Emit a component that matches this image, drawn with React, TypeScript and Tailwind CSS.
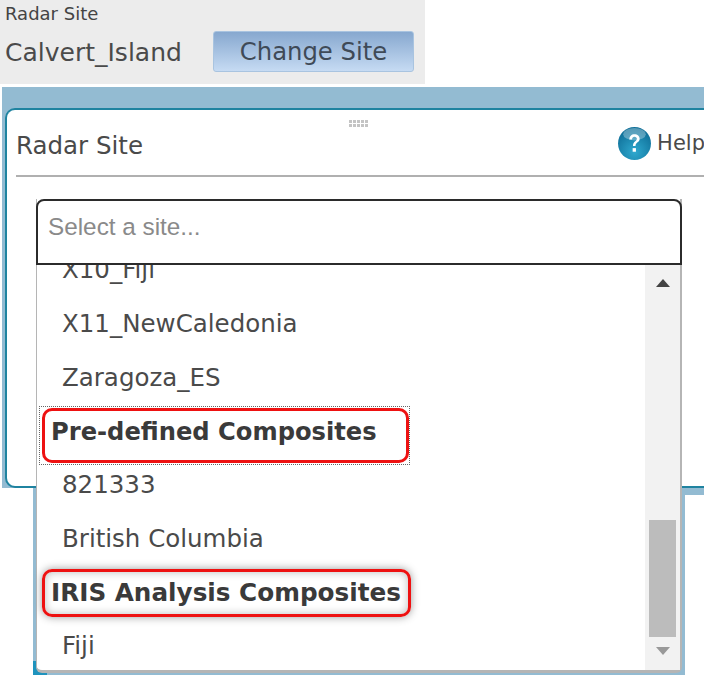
import React from 'react';

const siteItems = ['X10_Fiji', 'X11_NewCaledonia', 'Zaragoza_ES'];

const HelpIcon = () => (
  <svg width="35" height="35" viewBox="0 0 34 34" className="shrink-0">
    <defs>
      <radialGradient id="helpBall" cx="50%" cy="75%" r="70%">
        <stop offset="0%" stopColor="#2fa9cf" />
        <stop offset="100%" stopColor="#0f6f98" />
      </radialGradient>
    </defs>
    <circle cx="17" cy="17" r="16" fill="url(#helpBall)" />
    <ellipse cx="17" cy="8" rx="11" ry="6" fill="#ffffff" opacity="0.3" />
    <path d="M12 13c0-3 2-5 5-5s5 2 5 4.500c0 3.500-4 3.500-4 7h-2.500c0-4.500 3.800-4.500 3.800-7 0-1-.9-2-2.300-2s-2.300 1-2.400 2.500z" fill="#ffffff" />
    <rect x="15.200" y="21.500" width="3.200" height="3.500" fill="#ffffff" />
  </svg>
);

export default function App() {
  return (
    <div className="relative w-[704px] h-[679px] overflow-hidden bg-white font-['DejaVu_Sans',sans-serif] text-[#4a4a4a]">
      {/* Site summary */}
      <div className="w-[425px] h-[84px] bg-[#ececec] pl-[5px]">
        <div className="text-[18px] leading-[27px] text-[#444444]">Radar Site</div>
        <div className="flex items-center h-[41px] mt-[4px] pt-[3px]">
          <span className="w-[208px] text-[25px]">Calvert_Island</span>
          <button className="w-[201px] h-[41px] -mt-[3px] pt-[2px] rounded-[3px] border border-[#a9c4e0] bg-gradient-to-b from-[#87a8cf] to-[#c6dbf3] text-[24.300px] text-[#3f4a57]">
            Change Site
          </button>
        </div>
      </div>

      {/* Radar site dialog */}
      <div className="ml-[2px] mt-[3px] h-[401px] bg-[#93bbd2] pl-[3px] pt-[21px]">
        <div className="relative h-[380px] rounded-l-[10px] border-l-2 border-y-2 border-[#1f83a0] bg-white pl-[9px]">
          <div className="absolute left-[342px] top-[10px] grid grid-cols-5 gap-px">
            {Array.from({ length: 10 }).map((_, i) => (
              <span key={i} className="w-[3px] h-[3px] bg-[#c4c4c4]" />
            ))}
          </div>
          <div className="flex items-center justify-between h-[67px] mr-[-1px] border-b-2 border-[#b0b0b0] pt-[2px]">
            <span className="text-[24.500px] pt-[5px]">Radar Site</span>
            <span className="flex items-center gap-[5px] text-[21px]">
              <HelpIcon />
              Help
            </span>
          </div>
        </div>
      </div>

      {/* Second dialog showing behind the list */}
      <div className="ml-[33px] h-[187px] bg-[#93bbd2]" />
      <div className="absolute left-[685px] top-[495px] w-[19px] h-[184px] bg-white" />
      <div className="absolute left-[33px] top-[675px] w-[671px] h-[4px] bg-white" />
      <div className="absolute left-[33px] top-[661px] w-[5px] h-[14px] bg-[#1f93bd]" />
      <div className="absolute left-[33px] top-[672px] w-[14px] h-[3px] bg-[#1f93bd]" />

      {/* Site picker */}
      <div className="absolute left-[36px] top-[199px] w-[646px] h-[474px] flex flex-col rounded-b-[6px] border-b-[3px] border-r-2 border-l border-[#b5b5b5] bg-white">
        <div className="-mx-px -mr-[2px] h-[66px] shrink-0 flex items-center rounded-t-[8px] border-2 border-[#2b2b2b] bg-white pl-[10px] pb-[9px] font-['Liberation_Sans',sans-serif] text-[24.300px] text-[#8a8a8a]">
          Select a site...
        </div>
        <div className="flex flex-1 min-h-0">
          <div className="relative flex-1 overflow-hidden text-[24.500px]">
            <div className="-mt-[22px] pl-[25px]">
              {siteItems.map((name) => (
                <div key={name} className="h-[54px] flex items-center">
                  {name}
                </div>
              ))}
            </div>
            <div className="pl-[14px] h-[54px] flex items-center font-bold text-[24.200px] text-[#3a3a3a]">
              Pre-defined Composites
            </div>
            <div className="pl-[25px] h-[53px] flex items-center">821333</div>
            <div className="pl-[25px] h-[54px] flex items-center">British Columbia</div>
            <div className="pl-[14px] h-[53px] flex items-center font-bold text-[24.700px] text-[#3a3a3a]">
              IRIS Analysis Composites
            </div>
            <div className="pl-[25px] h-[54px] flex items-center">Fiji</div>
          </div>
          {/* Scrollbar */}
          <div className="w-[35px] shrink-0 flex flex-col items-center bg-[#f2f2f2] pt-[14px] pb-[15px]">
            <span className="w-0 h-0 border-x-[7px] border-x-transparent border-b-[8px] border-b-[#444444]" />
            <div className="flex-1" />
            <div className="w-[27px] h-[117px] bg-[#bcbcbc] mb-[10px]" />
            <span className="w-0 h-0 border-x-[7px] border-x-transparent border-t-[8px] border-t-[#999999]" />
          </div>
        </div>
      </div>

      {/* Red annotation boxes */}
      <div className="absolute left-[39px] top-[406px] w-[371px] h-[59px] border border-dotted border-[#666666]" />
      <div className="absolute left-[42px] top-[408px] w-[367px] h-[55px] rounded-[10px] border-[3px] border-[#ee1111]" />
      <div className="absolute left-[42px] top-[569px] w-[369px] h-[48px] rounded-[10px] border-[3px] border-[#ee1111] shadow-[0_0_8px_#999999,inset_0_0_8px_#bbbbbb]" />
    </div>
  );
}
